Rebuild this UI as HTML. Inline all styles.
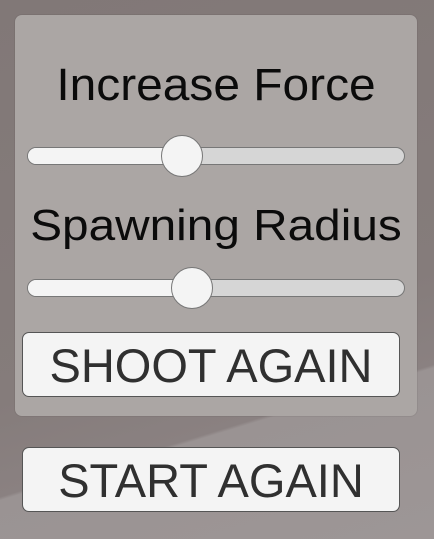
<!DOCTYPE html>
<html><head><style>
html,body{margin:0;padding:0}
body{width:434px;height:539px;position:relative;overflow:hidden;font-family:"Liberation Sans",sans-serif;
background:linear-gradient(163deg,#817877 0%,#857c7b 60%,#8a8181 74%,#9a9393 74.5%,#9d9696 100%);}
.panel{position:absolute;left:15px;top:15px;width:402px;height:401px;border-radius:7px;background:#aba6a4;box-shadow:0 0 0 1px rgba(0,0,0,0.05)}
.t{position:absolute;left:0;width:434px;text-align:center;line-height:1;color:#0b0b0b;white-space:nowrap}
.track{position:absolute;left:27px;width:376px;height:16px;border-radius:9px;background:#d6d6d6;border:1px solid #777;overflow:hidden}
.fill{position:absolute;left:0;top:0;bottom:0;background:#f4f4f4}
.knob{position:absolute;width:42px;height:42px;border-radius:50%;background:#f4f4f4;border:1px solid #777;box-sizing:border-box}
.btn{position:absolute;left:22px;width:378px;height:65px;box-sizing:border-box;border:1px solid #555;border-radius:7px;background:#f4f4f4}
.bt{color:#303030}
</style></head><body>
<div class="panel"></div>
<div class="t" style="top:62px;font-size:45px;left:-1px;transform:scaleX(1.064)">Increase Force</div>
<div class="track" style="top:147px"><div class="fill" style="width:160px"></div></div>
<div class="knob" style="left:161px;top:135px"></div>
<div class="t" style="top:204px;font-size:44px;left:-1px;transform:scaleX(1.085)">Spawning Radius</div>
<div class="track" style="top:279px"><div class="fill" style="width:170px"></div></div>
<div class="knob" style="left:171px;top:267px"></div>
<div class="btn" style="top:332px"></div>
<div class="t bt" style="top:342px;font-size:47px;left:-6px">SHOOT AGAIN</div>
<div class="btn" style="top:447px"></div>
<div class="t bt" style="top:457px;font-size:47px;left:-6px">START AGAIN</div>
</body></html>
